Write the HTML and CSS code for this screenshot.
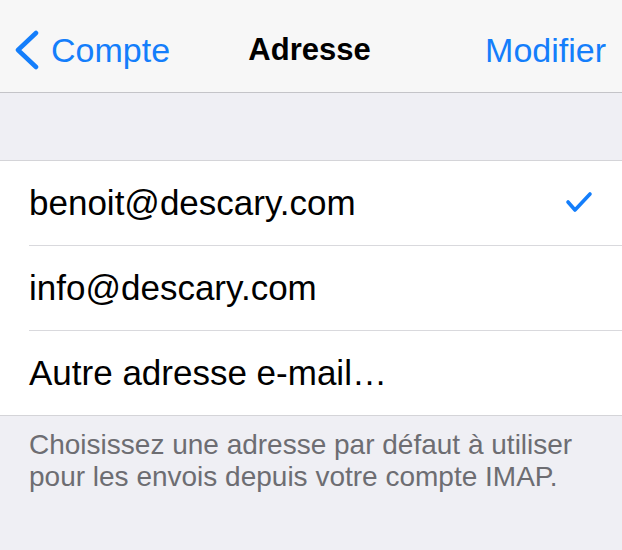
FILE: index.html
```html
<!DOCTYPE html>
<html lang="fr">
<head>
    <meta charset="UTF-8">
    <meta name="viewport" content="width=device-width, initial-scale=1">
    <title>Adresse</title>
    <link rel="stylesheet" href="styles.css">
</head>
<body>

<!-- barre de navigation -->
<header class="navbar">
    <a class="nav-back" href="#">
        <svg class="chevron" width="26" height="40" viewBox="0 0 26 40">
            <polyline points="23,3 5,20 23,37" fill="none" stroke="currentColor" stroke-width="4.5" stroke-linecap="round" stroke-linejoin="round"/>
        </svg>
        <span>Compte</span>
    </a>
    <h1 class="nav-title">Adresse</h1>
    <a class="nav-action" href="#">Modifier</a>
</header>

<div class="spacer"></div>

<!-- liste des adresses -->
<ul class="address-list">
    <li class="row">
        <div class="row-inner">
            <span>benoit@descary.com</span>
            <svg class="check" width="30" height="24" viewBox="0 0 30 24">
                <polyline points="4,11 11,19 26,3" fill="none" stroke="currentColor" stroke-width="3.6" stroke-linecap="round" stroke-linejoin="round"/>
            </svg>
        </div>
    </li>
    <li class="row">
        <div class="row-inner"><span>info@descary.com</span></div>
    </li>
    <li class="row">
        <div class="row-inner"><span>Autre adresse e-mail…</span></div>
    </li>
</ul>

<p class="footer-note">Choisissez une adresse par défaut à utiliser pour les envois depuis votre compte IMAP.</p>

</body>
</html>
```

FILE: styles.css
```css
body {
    margin: 0;
    padding: 0;
    background: #efeff4;
    font-family: 'Liberation Sans', Arial, sans-serif;
    color: #000;
}

.navbar {
    height: 84px;
    padding: 8px 16px 0 13px;
    background: #f7f7f7;
    border-bottom: 1px solid #c4c4c8;
    display: grid;
    grid-template-columns: 1fr auto 1fr;
    align-items: center;
    font-size: 34px;
    line-height: 40px;
}

.nav-back, .nav-action {
    color: #147efb;
    text-decoration: none;
}

.nav-back {
    display: flex;
    align-items: center;
}

.chevron {
    margin-right: 12px;
}

.nav-title {
    margin: 0;
    font-size: 31px;
    font-weight: bold;
}

.nav-action {
    justify-self: end;
}

.spacer {
    height: 67px;
}

.address-list {
    list-style: none;
    margin: 0;
    padding: 0;
    background: #fff;
    border-top: 1px solid #d4d4d8;
    border-bottom: 1px solid #d4d4d8;
}

.row {
    padding-left: 29px;
}

.row-inner {
    height: 84px;
    padding-right: 28px;
    display: flex;
    align-items: center;
    justify-content: space-between;
    font-size: 35px;
    border-bottom: 1px solid #d9d9dd;
}

.row:last-child .row-inner {
    border-bottom: none;
}

.check {
    color: #147efb;
}

.footer-note {
    margin: 0;
    padding: 13px 40px 0 29px;
    font-size: 28px;
    line-height: 32px;
    color: #6d6d72;
}
```
